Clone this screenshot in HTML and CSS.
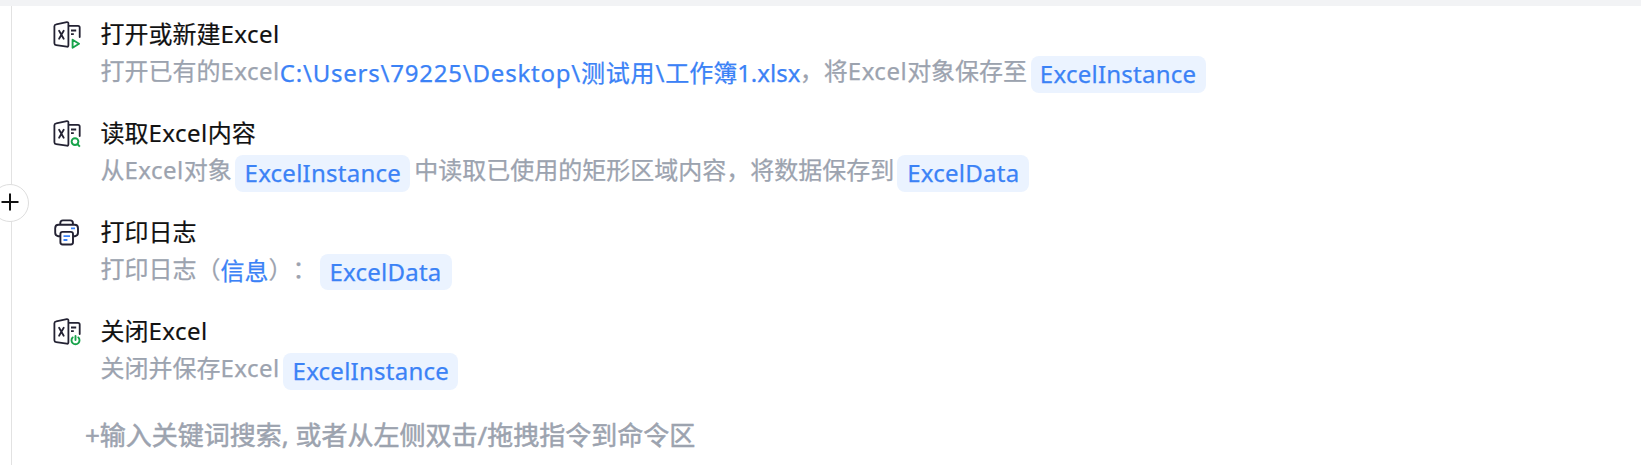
FILE: index.html
```html
<!DOCTYPE html>
<html lang="zh-CN">
<head>
<meta charset="utf-8">
<title>流程编辑</title>
<link rel="stylesheet" href="styles.css">
</head>
<body>
<svg class="defs" width="0" height="0">
  <symbol id="sheet" viewBox="0 0 28 28">
    <g fill="none" stroke="#232233" stroke-width="1.8" stroke-linecap="round" stroke-linejoin="round">
      <path d="M3.2 3.3 13.8 1.2Q15.4 1 15.4 2.5V24.3Q15.4 26 13.8 25.7L3.2 24.1Q1.4 23.8 1.4 22.2V5.2Q1.4 3.6 3.2 3.3Z"/>
      <path d="M15.8 4.8H25Q26.7 4.8 26.7 6.4V16"/>
      <path d="M6.1 9.8 10.7 17.7M10.7 9.8 6.1 17.7"/>
      <path d="M18 9.5H23.2M18 13.2H20.8" stroke-linecap="butt"/>
    </g>
  </symbol>
</svg>
<div class="topbar"></div>
<main class="editor">
  <aside class="rail">
    <button class="add" aria-label="添加"><svg width="18" height="18" viewBox="0 0 18 18"><path d="M9 .5V17.5M.5 9H17.5" stroke="#111" stroke-width="2"/></svg></button>
  </aside>
  <section class="steps">
    <article class="step">
      <svg class="icon" viewBox="0 0 28 28"><use href="#sheet"/><path d="M19.6 18.7 26 22.7 19.6 26.7Z" fill="none" stroke="#17a34a" stroke-width="1.9" stroke-linejoin="round"/></svg>
      <div class="body">
        <h3 class="title">打开或新建<span class="latin">Excel</span></h3>
        <p class="desc">打开已有的<span class="latin">Excel</span><span class="link path"><span class="dir">C:\Users\79225\Desktop\</span><span class="file">测试用\</span><span class="book">工作簿</span>1.xlsx</span>，将<span class="latin">Excel</span>对象保存至<span class="chip instance">ExcelInstance</span></p>
      </div>
    </article>
    <article class="step">
      <svg class="icon" viewBox="0 0 28 28"><use href="#sheet"/><g fill="none" stroke="#17a34a" stroke-width="1.9"><circle cx="22" cy="21.6" r="3.4"/><path d="M24.3 24 26.9 26.6"/></g></svg>
      <div class="body">
        <h3 class="title">读取<span class="latin">Excel</span>内容</h3>
        <p class="desc">从<span class="latin">Excel</span>对象<span class="chip instance">ExcelInstance</span>中读取已使用的矩形区域内容，将数据保存到<span class="chip data">ExcelData</span></p>
      </div>
    </article>
    <article class="step">
      <svg class="icon" viewBox="0 0 28 28"><g fill="none" stroke="#232233" stroke-width="1.9" stroke-linejoin="round"><path d="M7.3 6V4Q7.3 1.4 9.9 1.4H17.3Q19.9 1.4 19.9 4V6"/><path d="M7 17.2H5.3Q2.2 16.6 2.2 13.7V9.2Q2.2 5.8 5.6 5.8H21.6Q25 5.8 25 9.2V13.7Q25 16.6 21.9 17.2H20.4"/><rect x="7.4" y="12.9" width="12.6" height="12.6" rx="2.2" fill="#fff"/></g><path d="M18 9.3H22M10.5 17.2H17M10.5 21H14.4" stroke="#3b82f6" stroke-width="1.8"/></svg>
      <div class="body">
        <h3 class="title">打印日志</h3>
        <p class="desc">打印日志（<span class="link">信息</span>）：<span class="chip data log">ExcelData</span></p>
      </div>
    </article>
    <article class="step">
      <svg class="icon" viewBox="0 0 28 28"><use href="#sheet"/><g fill="none" stroke="#17a34a" stroke-width="1.9" stroke-linecap="round"><path d="M19.7 19.4A4 4 0 1 0 25.3 19.4"/><path d="M22.5 18V22"/></g></svg>
      <div class="body">
        <h3 class="title">关闭<span class="latin">Excel</span></h3>
        <p class="desc">关闭并保存<span class="latin">Excel</span><span class="chip instance">ExcelInstance</span></p>
      </div>
    </article>
    <div class="hint">+输入关键词搜索, 或者从左侧双击/拖拽指令到命令区</div>
  </section>
</main>
</body>
</html>
```
FILE: styles.css
```css
* { box-sizing: border-box; }
body {
  margin: 0;
  height: 465px;
  overflow: hidden;
  display: flex;
  flex-direction: column;
  background: #fff;
  font-family: "Noto Sans", "Noto Sans CJK SC", sans-serif;
  font-size: 24px;
  text-spacing-trim: space-all;
}
.defs { display: block; flex: none; }
.topbar { height: 6px; flex: none; background: #f2f3f5; }
.editor { flex: 1; display: flex; }
.rail {
  width: 12px;
  flex: none;
  border-right: 1px solid #e2e2e2;
}
.add {
  position: relative;
  z-index: 1;
  display: flex;
  align-items: center;
  width: 38px;
  height: 38px;
  margin: 178px 0 0 -9px;
  padding: 0 0 2px 9px;
  border: 1px solid #dedede;
  border-radius: 50%;
  background: #fff;
}
.add svg { flex: none; }
.steps { padding: 12px 0 0 41px; }
.step { display: flex; height: 99px; }
.icon { width: 28px; height: 28px; margin-top: 3px; flex: none; }
.body { padding-left: 19.5px; white-space: nowrap; }
.title {
  margin: 0;
  height: 34px;
  line-height: 32px;
  font-size: 24px;
  font-weight: 400;
  color: #111;
  -webkit-text-stroke: 0.2px;
}
.latin { letter-spacing: 0.5px; }
.desc {
  display: flex;
  height: 38px;
  margin: 3px 0 0;
  line-height: 32px;
  color: #9ca3af;
  -webkit-text-stroke: 0.25px;
}
.link { color: #3b82f6; padding-top: 2px; }
.path { width: 520px; }
.dir { letter-spacing: 0.78px; }
.file { letter-spacing: 0.8px; }
.chip {
  height: 37px;
  margin: 1px 4px 0 3.5px;
  border-radius: 8px;
  background: #ebf3ff;
  color: #3b82f6;
  line-height: 35px;
  letter-spacing: 0.25px;
  text-align: center;
}
.instance { width: 175px; }
.data { width: 132px; margin-left: 3px; }
.log { height: 36px; }
.hint {
  height: 40px;
  margin: 1px 0 0 32px;
  line-height: 40px;
  font-size: 26px;
  color: #9ca3af;
  -webkit-text-stroke: 0.5px;
}
```
